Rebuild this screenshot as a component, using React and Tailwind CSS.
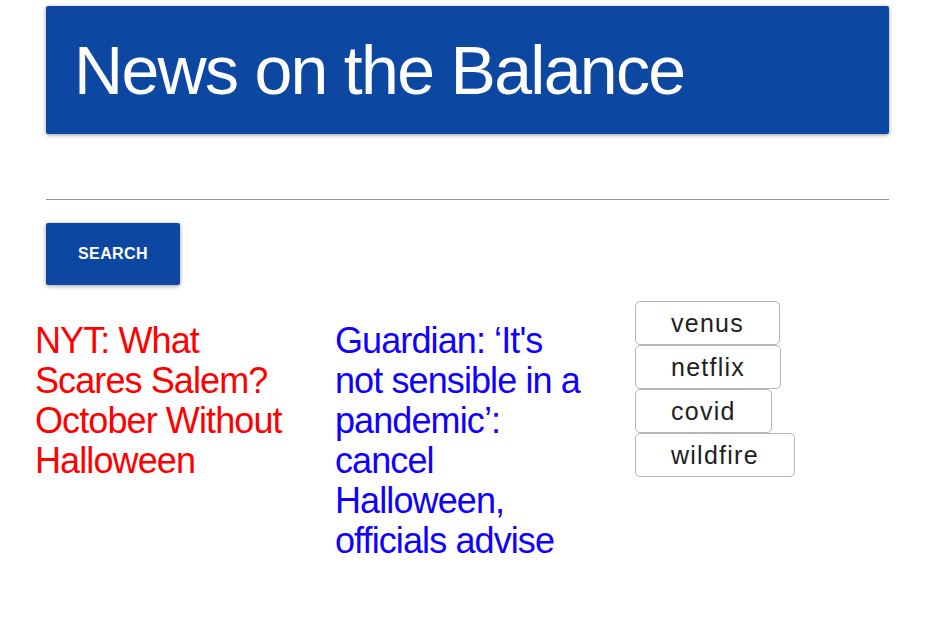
const TOPICS = ['venus', 'netflix', 'covid', 'wildfire'];

function Topic({ name }) {
  return (
    <button
      type="button"
      className="flex h-11 items-center rounded-[5px] border border-[#b5b5b5] bg-white px-[35px] text-[25px] leading-8 tracking-wider text-[#212121]"
    >
      {name}
    </button>
  );
}

function Headline({ className, children }) {
  return (
    <h2 className={`pt-5 text-4xl tracking-tight ${className}`}>
      <a href="#story">{children}</a>
    </h2>
  );
}

export default function App() {
  return (
    <main className="bg-white pt-1.5 font-['Liberation_Sans',Arial,sans-serif]">
      <div className="pr-[47px] pl-[46px]">
        <header className="flex h-32 items-center rounded-xs bg-[#0c48a1] px-7 shadow-[0_1px_4px_rgba(0,0,0,0.4)]">
          <h1 className="text-[68px] leading-20 tracking-tight text-white">News on the Balance</h1>
        </header>
        <form onSubmit={(e) => e.preventDefault()}>
          <input
            type="text"
            aria-label="Search the news"
            className="mt-4 block h-[50px] w-full border-b border-[#949494] text-2xl outline-none"
          />
          <button
            type="submit"
            className="mt-[23px] flex h-[62px] items-center rounded-xs bg-[#0c48a1] px-8 text-base font-bold tracking-wide text-white shadow-[0_1px_4px_rgba(0,0,0,0.4)]"
          >
            SEARCH
          </button>
        </form>
      </div>
      <div className="mt-4 grid grid-cols-[300px_300px_1fr] pl-[35px]">
        <Headline className="pr-9 text-[#ff0000]">NYT: What Scares Salem? October Without Halloween</Headline>
        <Headline className="pr-12 text-[#0f00ff]">
          Guardian: ‘It's not sensible in a pandemic’: cancel Halloween, officials advise
        </Headline>
        <div className="flex flex-col items-start">
          {TOPICS.map((name) => (
            <Topic key={name} name={name} />
          ))}
        </div>
      </div>
    </main>
  );
}
